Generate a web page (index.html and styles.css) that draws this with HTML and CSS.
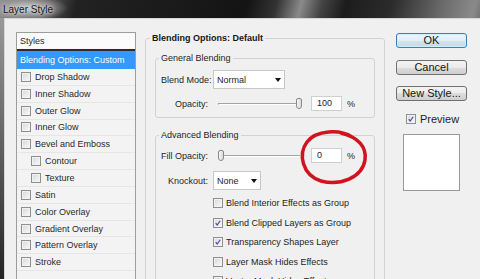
FILE: index.html
```html
<!DOCTYPE html>
<html lang="en">
<head>
  <meta charset="UTF-8" />
  <title>Layer Style</title>
  <link rel="stylesheet" href="styles.css">
</head>
<body>
<div class="window">
  <div class="titlebar"><span class="title">Layer Style</span></div>

  <div class="dialog">
    <!-- left: list of styles -->
    <div class="styles-list">
      <div class="list-head">Styles</div>
      <div class="list-row selected">Blending Options: Custom</div>
      <div class="list-row"><span class="cb"></span>Drop Shadow</div>
      <div class="list-row"><span class="cb"></span>Inner Shadow</div>
      <div class="list-row"><span class="cb"></span>Outer Glow</div>
      <div class="list-row"><span class="cb"></span>Inner Glow</div>
      <div class="list-row"><span class="cb"></span>Bevel and Emboss</div>
      <div class="list-row sub"><span class="cb"></span>Contour</div>
      <div class="list-row sub"><span class="cb"></span>Texture</div>
      <div class="list-row"><span class="cb"></span>Satin</div>
      <div class="list-row"><span class="cb"></span>Color Overlay</div>
      <div class="list-row"><span class="cb"></span>Gradient Overlay</div>
      <div class="list-row"><span class="cb"></span>Pattern Overlay</div>
      <div class="list-row"><span class="cb"></span>Stroke</div>
    </div>

    <!-- middle: blending options -->
    <div class="main">
      <fieldset class="group outer">
        <legend>Blending Options: Default</legend>

        <fieldset class="group inner">
          <legend>General Blending</legend>
          <div class="form-row row-select">
            <span class="lbl">Blend Mode:</span>
            <div class="select wide">Normal<span class="arrow"></span></div>
          </div>
          <div class="form-row row-slider gap7">
            <span class="lbl">Opacity:</span>
            <div class="slider"><span class="track"></span><span class="thumb" style="--v: 1"></span></div>
            <div class="num">100</div>
            <span class="pct">%</span>
          </div>
        </fieldset>

        <fieldset class="group inner advanced">
          <legend>Advanced Blending</legend>
          <div class="form-row row-slider">
            <span class="lbl">Fill Opacity:</span>
            <div class="slider"><span class="track"></span><span class="thumb" style="--v: 0"></span></div>
            <div class="num">0</div>
            <span class="pct">%</span>
          </div>
          <div class="form-row row-select gap9">
            <span class="lbl">Knockout:</span>
            <div class="select narrow">None<span class="arrow"></span></div>
          </div>
          <div class="checks">
            <div class="check-row"><span class="cb"></span>Blend Interior Effects as Group</div>
            <div class="check-row"><span class="cb checked"><svg viewBox="0 0 10 10"><path d="M2.2 5.2 L4 7.6 L7.8 2.2"/></svg></span>Blend Clipped Layers as Group</div>
            <div class="check-row"><span class="cb checked"><svg viewBox="0 0 10 10"><path d="M2.2 5.2 L4 7.6 L7.8 2.2"/></svg></span>Transparency Shapes Layer</div>
            <div class="check-row"><span class="cb"></span>Layer Mask Hides Effects</div>
            <div class="check-row"><span class="cb"></span>Vector Mask Hides Effects</div>
          </div>
        </fieldset>
      </fieldset>
    </div>

    <!-- right: buttons -->
    <div class="side">
      <button class="btn default">OK</button>
      <button class="btn">Cancel</button>
      <button class="btn">New Style...</button>
      <div class="preview-row">
        <span class="cb checked"><svg viewBox="0 0 10 10"><path d="M2.2 5.2 L4 7.6 L7.8 2.2"/></svg></span>Preview
      </div>
      <div class="preview-box"></div>
    </div>
  </div>

  <!-- hand-drawn red circle around the fill opacity -->
  <svg class="annotation" viewBox="0 0 480 279">
    <path d="M352 137 C340 129 316 130 307 142 C298 154 302 175 321 181 C340 186 362 178 365 160 C367 147 358 137 341 133"/>
  </svg>
</div>
</body>
</html>
```

FILE: styles.css
```css
* {
  box-sizing: border-box;
}
html, body {
  margin: 0;
}
body {
  width: 480px;
  height: 279px;
  overflow: hidden;
  font-family: "Liberation Sans", Arial, sans-serif;
  font-size: 9px;
  color: #1e1e1e;
}
.window {
  position: relative;
  width: 480px;
  height: 279px;
  overflow: hidden;
  display: flex;
  flex-direction: column;
  background: linear-gradient(180deg, #a0a0a0 0%, #6a6a6a 45%, #232323 100%);
}

/* title bar */
.titlebar {
  flex: none;
  height: 18px;
  padding-left: 3px;
  display: flex;
  align-items: center;
  background:
    radial-gradient(ellipse 40px 13px at 28px 8px, rgba(205,205,205,0.95), rgba(165,165,165,0.6) 60%, transparent),
    linear-gradient(105deg, #8c8c8c 0px, #5a5a5a 45px, #222 75px, #141414 240px, #333 268px, #8a8a8a 292px, #444 312px, #1c1c1c 335px, #2c2c2c 380px, #6c6c6c 430px, #8a8a8a 460px, #555 480px);
}
.title {
  font-size: 10px;
  color: #151515;
  text-shadow: 0 0 3px #e8e8e8, 0 0 6px #dcdcdc;
}

/* dialog body */
.dialog {
  flex: 1;
  margin-left: 4px;
  border-left: 1px solid #d6d6d6;
  border-top: 1px solid #d6d6d6;
  background: #f0f0f0;
  display: flex;
  align-items: flex-start;
  padding: 13px 0 0 11px;
}

/* styles list */
.styles-list {
  flex: none;
  width: 120px;
  height: 260px;
  border: 1px solid #9d9d9d;
  background: #f3f3f3;
}
.list-head {
  height: 18px;
  padding-left: 3px;
  line-height: 16px;
  background: #fbfbfb;
  border-bottom: 2px solid #2b2b2b;
}
.list-row {
  height: 16.85px;
  display: flex;
  align-items: center;
  gap: 4px;
  padding-left: 4px;
  white-space: nowrap;
  color: #2a2a2a;
  border-bottom: 1px solid #e6e6e6;
}
.list-row.selected {
  height: 18px;
  padding-left: 3px;
  background: #3399ff;
  color: #fff;
  border-bottom-color: #3399ff;
}
.list-row.sub {
  padding-left: 14px;
}

/* checkboxes */
.cb {
  flex: none;
  width: 10px;
  height: 10px;
  border: 1px solid #8e8f8f;
  background: linear-gradient(135deg, #d6d6d6, #fbfbfb);
  box-shadow: inset 0 0 0 1px #f2f2f2;
  display: flex;
}
.cb svg {
  width: 8px;
  height: 8px;
}
.cb path {
  fill: none;
  stroke: #4646a8;
  stroke-width: 1.4;
}

/* blending options */
.main {
  flex: none;
  width: 240px;
  margin-left: 9px;
}
.group {
  margin: 0;
  min-width: 0;
  border: 1px solid #d3d3d3;
  border-radius: 3px;
}
.outer {
  height: 300px;
  padding: 8px 9px 0;
}
.outer > legend {
  margin-left: -5px;
  padding: 0 2px;
  line-height: 12px;
  font-weight: bold;
  color: #1a1414;
}
.inner {
  padding: 6px 5px 6px;
}
.inner > legend {
  margin-left: -2px;
  padding: 0 2px;
  line-height: 12px;
}
.advanced {
  margin-top: 11px;
  padding-top: 7px;
  height: 200px;
}
.form-row {
  display: flex;
  align-items: center;
  gap: 5px;
}
.lbl {
  flex: none;
  width: 47px;
  text-align: right;
  white-space: nowrap;
}
.row-select {
  height: 19px;
}
.row-slider {
  height: 15px;
}
.gap7 {
  margin-top: 7px;
}
.gap9 {
  margin-top: 8px;
}
.select {
  height: 19px;
  display: flex;
  align-items: center;
  justify-content: space-between;
  padding: 0 3px 0 3px;
  background: #fff;
  border: 1px solid #c8c8c8;
}
.select.wide {
  width: 72px;
}
.select.narrow {
  width: 48px;
}
.arrow {
  width: 0;
  height: 0;
  border-top: 4px solid #111;
  border-left: 3px solid transparent;
  border-right: 3px solid transparent;
}
.slider {
  position: relative;
  flex: none;
  width: 90px;
  height: 15px;
}
.track {
  position: absolute;
  left: 5px;
  right: 3px;
  top: 7px;
  height: 2px;
  border-top: 1px solid #a4a4a4;
  border-bottom: 1px solid #fff;
  border-left: 1px solid #888;
}
.thumb {
  position: absolute;
  top: 2px;
  left: calc(5px + var(--v) * 78px);
  width: 6px;
  height: 11px;
  border: 1px solid #8a8a8a;
  border-radius: 2px 2px 3px 3px;
  background: linear-gradient(90deg, #f6f6f6, #dadada);
}
.num {
  flex: none;
  width: 31px;
  height: 15px;
  margin-left: 3px;
  padding-left: 5px;
  line-height: 13px;
  background: #fff;
  border: 1px solid #cfcfcf;
}
.checks {
  margin: 3.5px 0 0 52px;
}
.check-row {
  height: 19.5px;
  display: flex;
  align-items: center;
  gap: 3px;
  white-space: nowrap;
}

/* right column */
.side {
  flex: none;
  width: 71px;
  margin: 1px 0 0 11px;
  display: flex;
  flex-direction: column;
}
.btn {
  height: 15px;
  margin: 0 0 11.5px;
  padding: 0;
  font-family: inherit;
  font-size: 11px;
  line-height: 13px;
  color: #151515;
  border: 1px solid #707070;
  border-radius: 3px;
  background: linear-gradient(#f3f3f3 0%, #ebebeb 50%, #dddddd 50%, #cfcfcf 100%);
}
.btn.default {
  border-color: #3c7fb1;
  background: linear-gradient(#eef5f9 0%, #e3eef5 50%, #d3e3ee 50%, #c6dae8 100%);
  box-shadow: inset 0 0 0 1px #cfeefc;
}
.preview-row {
  display: flex;
  align-items: center;
  gap: 4px;
  height: 11px;
  margin: 0.5px 0 0 10px;
  font-size: 11px;
}
.preview-box {
  width: 57px;
  height: 57px;
  margin: 10px 0 0 7px;
  background: #fff;
  border: 1px solid #9a9a9a;
}

/* red marker drawn on top of the screenshot */
.annotation {
  position: absolute;
  left: 0;
  top: 0;
  width: 480px;
  height: 279px;
  pointer-events: none;
}
.annotation path {
  fill: none;
  stroke: #d0141e;
  stroke-width: 3.5;
  stroke-linecap: round;
}
```
